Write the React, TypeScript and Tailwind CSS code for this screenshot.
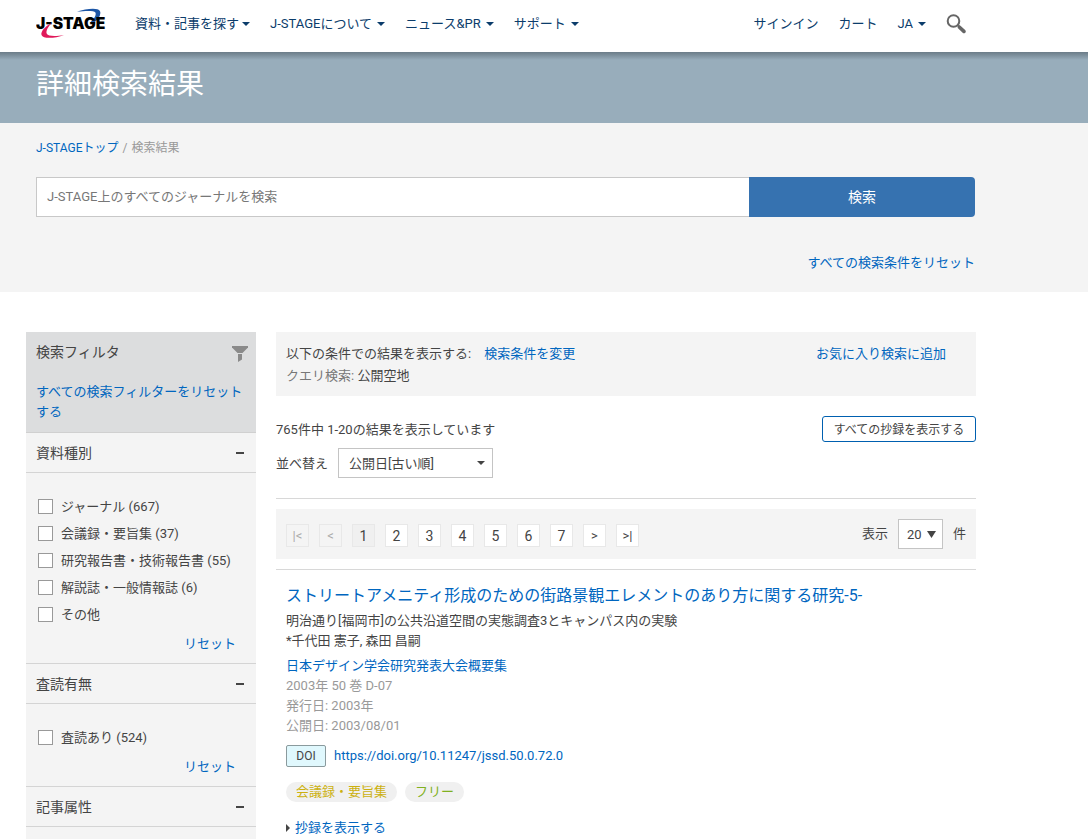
const menuItems = ["資料・記事を探す", "J-STAGEについて", "ニュース&PR", "サポート"]

const filterGroups = [
  {
    title: "資料種別",
    options: [
      "ジャーナル (667)",
      "会議録・要旨集 (37)",
      "研究報告書・技術報告書 (55)",
      "解説誌・一般情報誌 (6)",
      "その他",
    ],
  },
  { title: "査読有無", options: ["査読あり (524)"] },
  { title: "記事属性", options: [] },
]

const pages = ["|<", "<", "1", "2", "3", "4", "5", "6", "7", ">", ">|"]

function Caret({ className = "" }: { className?: string }) {
  return (
    <svg viewBox="0 0 8 4" className={`w-2 h-1 shrink-0 ${className}`} fill="currentColor" aria-hidden="true">
      <path d="M0 0h8L4 4z" />
    </svg>
  )
}

function Logo() {
  return (
    <svg viewBox="0 0 72 32" className="w-[72px] h-8" role="img" aria-label="J-STAGE">
      <path d="M41 3.600C50 .8 62-.8 64 3.200c1.400 3.200-1.400 8-6.200 11.800l-3.600-.6c4-3.600 6.400-7.400 5.200-9.800C58 2.400 50 2.800 41 3.600z" fill="#1c56a6" />
      <text x="0" y="21" fontSize="15.600" className="font-[Inter] font-black" fill="#000">
        J-STAGE
      </text>
      <path d="M15.500 15C9 18.500 4.500 23.500 5.500 27c1.400 4 13 3.400 22.500.2-8 1.200-16 1.400-17.200-1.400C9.600 23 12 19 15.500 15z" fill="#e0195a" />
    </svg>
  )
}

function Header() {
  return (
    <header className="bg-white">
      <div className="max-w-[976px] h-[52px] pl-9 pr-[10px] pb-1 flex items-center justify-between text-[#0b3c6b]">
        <div className="flex items-center gap-[27px]">
          <a href="#top">
            <Logo />
          </a>
          <nav className="flex gap-5">
            {menuItems.map((item, i) => (
              <a key={item} href="#menu" className={i === 0 ? "flex items-center gap-[3px]" : "flex items-center gap-[5px]"}>
                {item}
                <Caret />
              </a>
            ))}
          </nav>
        </div>
        <div className="flex items-center gap-5">
          <a href="#signin">サインイン</a>
          <a href="#cart">カート</a>
          <button className="flex items-center gap-[5px]">
            JA
            <Caret />
          </button>
          <button aria-label="検索を開く">
            <svg viewBox="0 0 20 20" className="w-5 h-5" fill="none" stroke="#666" aria-hidden="true">
              <circle cx="7.500" cy="7" r="5.800" strokeWidth="2" />
              <path d="M12 11.500l1.500 1.500" strokeWidth="2.200" />
              <path d="M13.500 13.200l4.400 4.200" strokeWidth="3.600" strokeLinecap="round" />
            </svg>
          </button>
        </div>
      </div>
    </header>
  )
}

function SearchArea() {
  return (
    <section className="bg-[#f4f4f4]">
      <div className="max-w-[975px] pl-9 pt-[15px] pb-[19px]">
        <p className="text-xs leading-5 text-[#999]">
          <a href="#top" className="text-[#0066bf]">
            J-STAGEトップ
          </a>
          <span className="mx-1">/</span>
          検索結果
        </p>
        <form className="flex mt-[19px] h-10" onSubmit={(e) => e.preventDefault()}>
          <input
            type="text"
            aria-label="検索キーワード"
            placeholder="J-STAGE上のすべてのジャーナルを検索"
            className="flex-1 min-w-0 bg-white border border-r-0 border-[#c8c8c8] px-[10px] placeholder:text-[#777]"
          />
          <button className="w-[226px] bg-[#3672b0] text-white text-sm rounded-r">検索</button>
        </form>
        <div className="mt-9 text-right leading-5">
          <a href="#reset" className="text-[#0066bf]">
            すべての検索条件をリセット
          </a>
        </div>
      </div>
    </section>
  )
}

function Sidebar() {
  return (
    <aside className="w-[230px] shrink-0 bg-[#f4f4f4] leading-5">
      <div className="bg-[#dcddde] p-[10px] border-b border-[#d0d0d0]">
        <div className="flex justify-between">
          <h2 className="text-sm leading-5">検索フィルタ</h2>
          <svg viewBox="0 0 16 16" className="w-4 h-4 mt-1 mr-[-2px]" fill="#8a8a8a" aria-hidden="true">
            <path d="M0 0h16v1.500L10.500 7h-5L0 1.500z" />
            <path d="M6 8h4v5.500L6 16z" />
          </svg>
        </div>
        <a href="#reset" className="block mt-5 text-[#0066bf]">
          すべての検索フィルターをリセットする
        </a>
      </div>
      {filterGroups.map((group) => (
        <section key={group.title}>
          <button className="w-full h-10 px-[10px] border-b border-[#d4d4d4] flex items-center justify-between text-sm">
            {group.title}
            <span className="w-2 h-[2px] mr-[2px] bg-[#444]" />
          </button>
          {group.options.length > 0 ? (
            <div className="pt-5 pb-[9px] px-3 border-b border-[#d4d4d4]">
              {group.options.map((option) => (
                <label key={option} className="flex items-center gap-2 h-[27px]">
                  <input type="checkbox" className="appearance-none w-[15px] h-[15px] bg-white border border-[#999] checked:bg-[#3672b0]" />
                  {option}
                </label>
              ))}
              <div className="mt-[6px] pr-2 text-right">
                <a href="#reset" className="text-[#0066bf]">
                  リセット
                </a>
              </div>
            </div>
          ) : (
            <div className="h-3" />
          )}
        </section>
      ))}
    </aside>
  )
}

function Pager() {
  return (
    <div className="mt-[10px] h-[50px] px-[10px] bg-[#f4f4f4] flex items-center justify-between">
      <nav className="flex gap-[10px] mt-[3px]">
        {pages.map((page, i) => (
          <button
            key={page}
            disabled={i < 3}
            className={
              i < 2
                ? "w-[23px] h-[23px] border border-[#e8e8e8] text-[#aaa]"
                : i === 2
                  ? "w-[23px] h-[23px] border border-[#e8e8e8] bg-[#f0f0f0] text-sm"
                  : i < 9
                    ? "w-[23px] h-[23px] border border-[#e8e8e8] bg-white text-sm"
                    : "w-[23px] h-[23px] border border-[#e8e8e8] bg-white"
            }
          >
            {page}
          </button>
        ))}
      </nav>
      <div className="flex items-center gap-[10px]">
        <label htmlFor="count">表示</label>
        <div className="relative">
          <select id="count" className="appearance-none block w-[45px] h-[30px] pl-2 pt-[2px] bg-white border border-[#c4c4c4]">
            <option>20</option>
            <option>50</option>
            <option>100</option>
          </select>
          <svg viewBox="0 0 9 7" className="absolute right-[7px] top-3 w-[9px] h-[7px] pointer-events-none" fill="#444" aria-hidden="true">
            <path d="M0 0h9L4.500 7z" />
          </svg>
        </div>
        <span>件</span>
      </div>
    </div>
  )
}

function ResultItem() {
  return (
    <article className="mt-[10px] pt-[14px] pl-[10px] border-t border-[#d8d8d8] leading-5">
      <h3 className="text-base leading-6">
        <a href="#article" className="text-[#0066bf]">
          ストリートアメニティ形成のための街路景観エレメントのあり方に関する研究-5-
        </a>
      </h3>
      <p className="mt-[3px]">明治通り[福岡市]の公共沿道空間の実態調査3とキャンパス内の実験</p>
      <p>*千代田 憲子, 森田 昌嗣</p>
      <a href="#journal" className="block mt-[5px] text-[#0066bf]">
        日本デザイン学会研究発表大会概要集
      </a>
      <div className="text-[#999]">
        <p>2003年 50 巻 D-07</p>
        <p>発行日: 2003年</p>
        <p>公開日: 2003/08/01</p>
      </div>
      <div className="mt-[9px] flex items-center gap-2">
        <span className="w-10 h-[22px] flex items-center justify-center text-xs border border-[#8a9a9d] rounded-[2px] bg-[#e0f8fd]">DOI</span>
        <a href="#doi" className="text-[#0066bf]">
          https://doi.org/10.11247/jssd.50.0.72.0
        </a>
      </div>
      <div className="mt-[15px] flex gap-2">
        <span className="px-[10px] rounded-full bg-[#f0f0f0] text-[#ccb010]">会議録・要旨集</span>
        <span className="px-[10px] rounded-full bg-[#f0f0f0] text-[#80b020]">フリー</span>
      </div>
      <a href="#abstract" className="mt-4 flex items-center gap-[5px] text-[#0066bf]">
        <svg viewBox="0 0 4 8" className="w-1 h-2" fill="#444" aria-hidden="true">
          <path d="M0 0l4 4-4 4z" />
        </svg>
        抄録を表示する
      </a>
    </article>
  )
}

export default function App() {
  return (
    <div className="bg-white text-[13px] text-[#444] font-[Roboto,'Noto_Sans_CJK_JP',sans-serif]">
      <Header />
      <div className="bg-[#98adbb]">
        <div className="h-2 bg-linear-to-b from-[#6b7c88] to-[#98adbb]" />
        <h1 className="h-[63px] pl-9 pt-[5px] text-[28px] leading-10 text-white">詳細検索結果</h1>
      </div>
      <SearchArea />
      <main className="max-w-[976px] pl-[26px] pt-10 flex gap-5">
        <Sidebar />
        <div className="flex-1 min-w-0">
          <div className="bg-[#f4f4f4] px-[10px] pt-[11px] pb-[9px] leading-[22px]">
            <div className="flex gap-[13px]">
              <span>以下の条件での結果を表示する:</span>
              <a href="#change" className="text-[#0066bf]">
                検索条件を変更
              </a>
              <a href="#favorite" className="ml-auto mr-5 text-[#0066bf]">
                お気に入り検索に追加
              </a>
            </div>
            <p>
              <span className="text-[#777]">クエリ検索:</span> 公開空地
            </p>
          </div>
          <div className="mt-5 pb-5 border-b border-[#d8d8d8] flex items-start justify-between">
            <div>
              <p className="pt-[2px] leading-6">765件中 1-20の結果を表示しています</p>
              <div className="mt-[6px] flex items-center gap-[10px]">
                <label htmlFor="sort" className="pt-[2px]">並べ替え</label>
                <div className="relative">
                  <select id="sort" className="appearance-none block w-[155px] h-[30px] pl-[10px] pt-[2px] bg-white border border-[#c4c4c4]">
                    <option>公開日[古い順]</option>
                    <option>公開日[新しい順]</option>
                  </select>
                  <Caret className="absolute right-2 top-[13px] pointer-events-none" />
                </div>
              </div>
            </div>
            <button className="w-[154px] h-[26px] pt-[2px] text-xs border border-[#0060b0] rounded-[3px]">すべての抄録を表示する</button>
          </div>
          <Pager />
          <ResultItem />
        </div>
      </main>
    </div>
  )
}
